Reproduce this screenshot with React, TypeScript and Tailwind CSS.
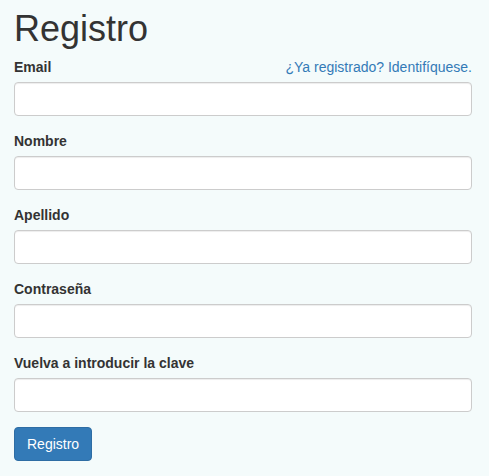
const fields = [
  "Email",
  "Nombre",
  "Apellido",
  "Contraseña",
  "Vuelva a introducir la clave",
];

const App = () => {
  return (
    <div className="min-h-[476px] bg-[#f4fbfb] pl-[14px] pr-[17px] pt-[9px] font-['Liberation_Sans',Arial,sans-serif] text-[14px] leading-[20px] text-[#333]">
      <h1 className="text-[36px] leading-[39.6px] font-normal mb-[8px]">Registro</h1>
      <form className="flex flex-col" onSubmit={(e) => e.preventDefault()}>
        {fields.map((label, i) => (
          <div key={label} className="mb-[15px] flex flex-col">
            <div className="flex items-baseline justify-between mb-[5px]">
              <label className="font-bold">{label}</label>
              {i === 0 && (
                <a href="#" className="text-[#337ab7]">
                  ¿Ya registrado? Identifíquese.
                </a>
              )}
            </div>
            <input
              type={i >= 3 ? "password" : "text"}
              className="h-[34px] w-full rounded-[4px] border border-[#ccc] bg-white px-3 shadow-[inset_0_1px_1px_rgba(0,0,0,0.075)] outline-none"
            />
          </div>
        ))}
        <div>
          <button
            type="submit"
            className="h-[34px] rounded-[4px] border border-[#2e6da4] bg-[#337ab7] px-3 text-white"
          >
            Registro
          </button>
        </div>
      </form>
    </div>
  );
};

export default App;
